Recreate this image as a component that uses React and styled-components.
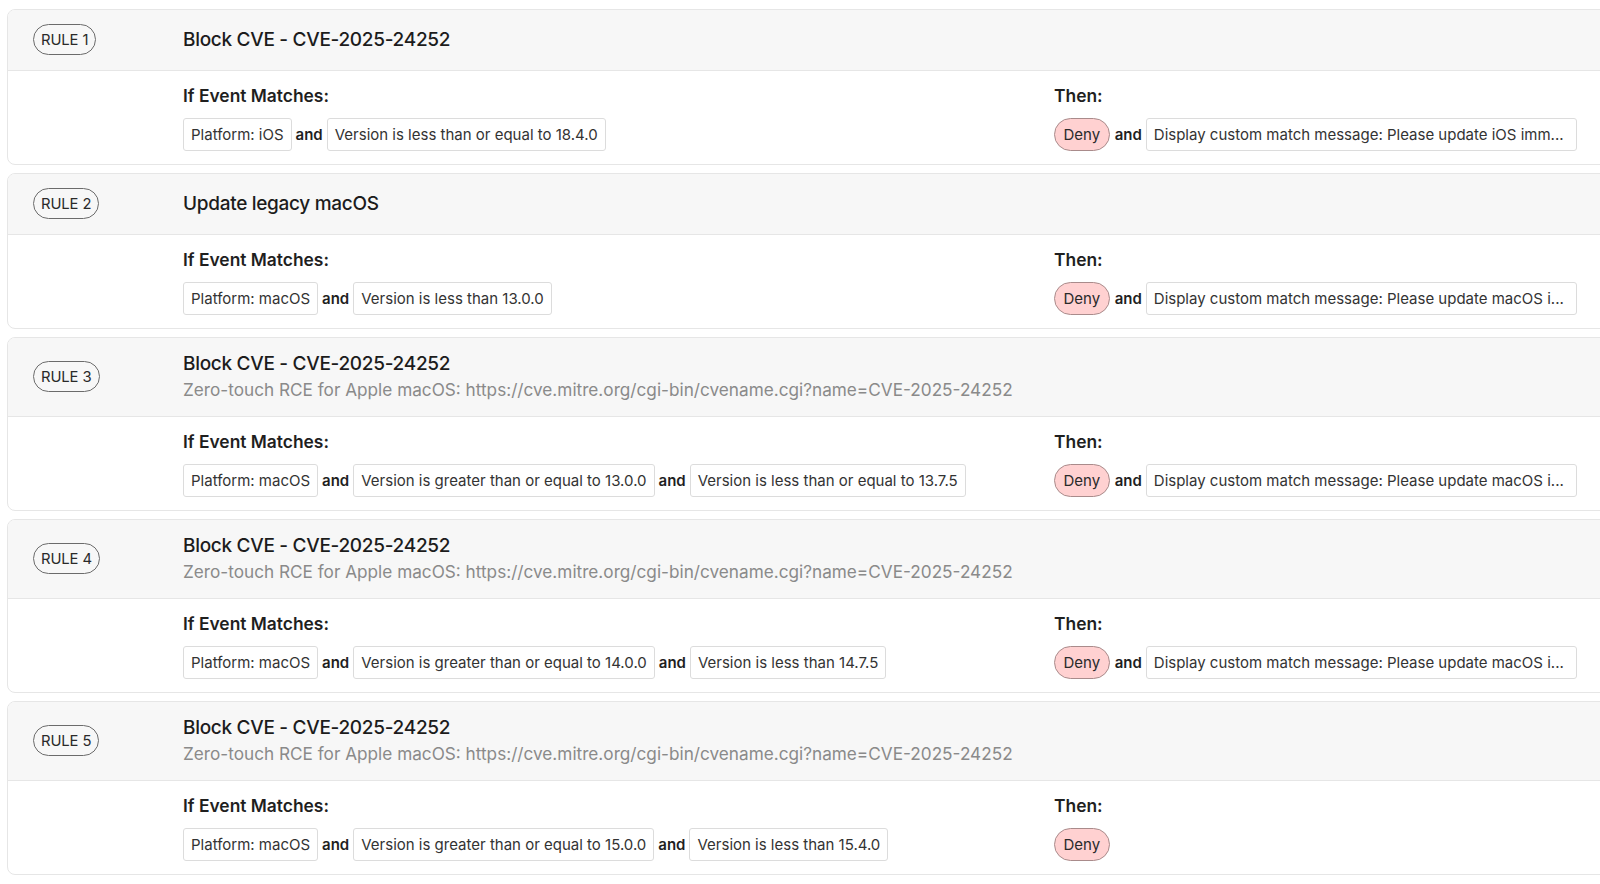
import styled, { createGlobalStyle } from 'styled-components';

const GlobalStyle = createGlobalStyle`
  html, body {
    margin: 0;
    padding: 0;
    background: #ffffff;
    overflow: hidden;
  }
  body {
    font-family: Inter, "Noto Sans", "Liberation Sans", sans-serif;
    color: #1f1f1f;
    -webkit-font-smoothing: antialiased;
  }
`;

const rules = [
  {
    id: 1,
    title: 'Block CVE - CVE-2025-24252',
    conditions: ['Platform: iOS', 'Version is less than or equal to 18.4.0'],
    message: 'Display custom match message: Please update iOS imm...',
  },
  {
    id: 2,
    title: 'Update legacy macOS',
    conditions: ['Platform: macOS', 'Version is less than 13.0.0'],
    message: 'Display custom match message: Please update macOS i...',
  },
  {
    id: 3,
    title: 'Block CVE - CVE-2025-24252',
    description:
      'Zero-touch RCE for Apple macOS: https://cve.mitre.org/cgi-bin/cvename.cgi?name=CVE-2025-24252',
    conditions: [
      'Platform: macOS',
      'Version is greater than or equal to 13.0.0',
      'Version is less than or equal to 13.7.5',
    ],
    message: 'Display custom match message: Please update macOS i...',
  },
  {
    id: 4,
    title: 'Block CVE - CVE-2025-24252',
    description:
      'Zero-touch RCE for Apple macOS: https://cve.mitre.org/cgi-bin/cvename.cgi?name=CVE-2025-24252',
    conditions: [
      'Platform: macOS',
      'Version is greater than or equal to 14.0.0',
      'Version is less than 14.7.5',
    ],
    message: 'Display custom match message: Please update macOS i...',
  },
  {
    id: 5,
    title: 'Block CVE - CVE-2025-24252',
    description:
      'Zero-touch RCE for Apple macOS: https://cve.mitre.org/cgi-bin/cvename.cgi?name=CVE-2025-24252',
    conditions: [
      'Platform: macOS',
      'Version is greater than or equal to 15.0.0',
      'Version is less than 15.4.0',
    ],
  },
];

const App = () => {
  return (
    <>
      <GlobalStyle />
      <Page>
        <RuleList>
          {rules.map((rule) => (
            <RuleCard key={rule.id}>
              <RuleHeader>
                <RuleBadgeCell>
                  <RuleBadge>RULE {rule.id}</RuleBadge>
                </RuleBadgeCell>
                <TitleBlock>
                  <RuleTitle>{rule.title}</RuleTitle>
                  {rule.description && (
                    <RuleDescription>{rule.description}</RuleDescription>
                  )}
                </TitleBlock>
              </RuleHeader>

              <RuleBody>
                <span />
                <Section>
                  <SectionLabel>If Event Matches:</SectionLabel>
                  <ChipRow>
                    {rule.conditions.map((c, i) => (
                      <ChipGroup key={c}>
                        {i > 0 && <Joiner>and</Joiner>}
                        <Chip>{c}</Chip>
                      </ChipGroup>
                    ))}
                  </ChipRow>
                </Section>
                <Section>
                  <SectionLabel>Then:</SectionLabel>
                  <ChipRow>
                    <DenyPill>Deny</DenyPill>
                    {rule.message && (
                      <>
                        <Joiner>and</Joiner>
                        <Chip $wide>{rule.message}</Chip>
                      </>
                    )}
                  </ChipRow>
                </Section>
              </RuleBody>
            </RuleCard>
          ))}
        </RuleList>
      </Page>
    </>
  );
};

const Page = styled.div`
  padding: 9px 0 0 7px;
  width: 1700px;
`;

const RuleList = styled.div`
  display: flex;
  flex-direction: column;
  gap: 8px;
`;

const RuleCard = styled.div`
  border: 1px solid #e6e6e6;
  border-radius: 8px;
  overflow: hidden;
  background: #ffffff;
`;

const RuleHeader = styled.div`
  display: grid;
  grid-template-columns: 175px 1fr;
  align-items: center;
  box-sizing: border-box;
  min-height: 61px;
  padding: 13px 0 14px;
  background: #f7f7f7;
  border-bottom: 1px solid #e6e6e6;
`;

const RuleBadgeCell = styled.div`
  padding-left: 25px;
`;

const RuleBadge = styled.span`
  display: inline-flex;
  align-items: center;
  justify-content: center;
  box-sizing: border-box;
  height: 31px;
  padding: 0 7px;
  border: 1px solid #6b6b6b;
  border-radius: 16px;
  font-size: 14.8px;
  color: #2a2a2a;
  letter-spacing: -0.1px;
`;

const TitleBlock = styled.div`
  display: flex;
  flex-direction: column;
`;

const RuleTitle = styled.div`
  font-size: 19px;
  font-weight: 500;
  line-height: 26px;
  color: #1c1c1c;
  letter-spacing: -0.3px;
`;

const RuleDescription = styled.div`
  font-size: 17.2px;
  line-height: 25px;
  color: #8a8a8a;
`;

const RuleBody = styled.div`
  display: grid;
  grid-template-columns: 175px 871px 1fr;
  padding: 15px 0 13px;
`;

const Section = styled.div`
  display: flex;
  flex-direction: column;
  gap: 12px;
`;

const SectionLabel = styled.div`
  font-size: 17.4px;
  font-weight: 600;
  line-height: 20px;
  color: #1f1f1f;
`;

const ChipRow = styled.div`
  display: flex;
  align-items: center;
  gap: 4px;
`;

const ChipGroup = styled.div`
  display: flex;
  align-items: center;
  gap: 4px;
`;

const Chip = styled.div`
  box-sizing: border-box;
  height: 33px;
  padding: 0 7px;
  display: flex;
  align-items: center;
  border: 1px solid #dcdcdc;
  border-radius: 3px;
  font-size: 15px;
  color: #333333;
  white-space: nowrap;
  ${(p) => p.$wide && 'width: 431px; overflow: hidden;'}
`;

const Joiner = styled.span`
  font-size: 15px;
  font-weight: 600;
  color: #1f1f1f;
`;

const DenyPill = styled.div`
  box-sizing: border-box;
  height: 33px;
  padding: 0 8.5px;
  display: flex;
  align-items: center;
  border: 1px solid #a98b8b;
  border-radius: 17px;
  background: #ffd1d1;
  font-size: 15px;
  color: #2a2a2a;
  margin-right: 1px;
`;

export default App;
